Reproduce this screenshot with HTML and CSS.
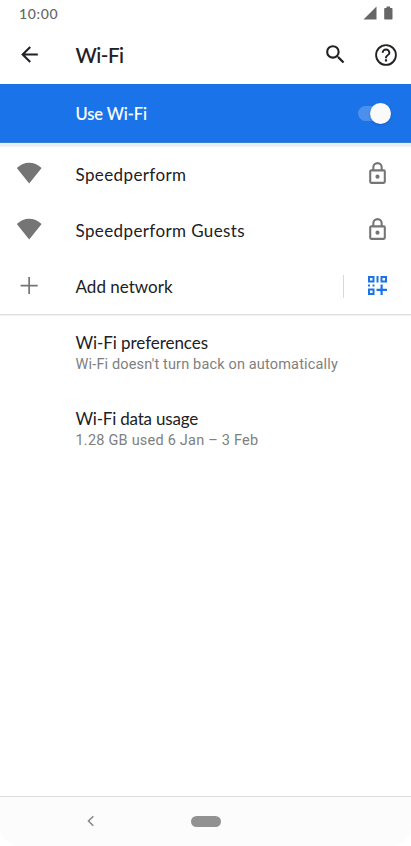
FILE: index.html
```html
<!DOCTYPE html>
<html lang="en">
<head>
<meta charset="utf-8">
<title>Wi-Fi</title>
<link rel="stylesheet" href="styles.css">
</head>
<body>
<div class="screen">
  <div class="status">
    <span class="clock">10:00</span>
    <svg class="status-icons" width="30" height="14" viewBox="0 0 30 14"><path d="M.5 13.500L13.500.5v13z"/><path d="M21.200 2.900q0-.8.8-.8h1.500V.5h3.600v1.600h1.600q.8 0 .8.8v9.800q0 .8-.8.8H22q-.8 0-.8-.8z"/></svg>
  </div>
  <header class="bar">
    <svg class="back" width="25" height="25" viewBox="0 0 24 24"><path d="M20 11H7.830l5.590-5.590L12 4l-8 8 8 8 1.410-1.410L7.830 13H20z"/></svg>
    <h1 class="title"><span class="t-title">Wi-Fi</span></h1>
    <svg class="search" width="25" height="25" viewBox="0 0 24 24"><path d="M15.500 14h-.790l-.280-.270A6.470 6.470 0 0 0 16 9.500 6.500 6.500 0 1 0 9.500 16c1.610 0 3.090-.590 4.230-1.570l.270.280v.790l5 4.990L20.490 19zm-6 0a4.500 4.500 0 1 1 0-9 4.500 4.500 0 0 1 0 9z"/></svg>
    <svg class="help" width="26" height="26" viewBox="0 0 24 24"><path d="M11 18h2v-2h-2zm1-16a10 10 0 1 0 0 20 10 10 0 0 0 0-20zm0 18.300a8.300 8.300 0 1 1 0-16.600 8.300 8.300 0 0 1 0 16.600zM12 6a4 4 0 0 0-4 4h1.800a2.200 2.200 0 1 1 4.400 0c0 2-3.100 1.750-3.100 5h1.800c0-2.250 3.100-2.500 3.100-5a4 4 0 0 0-4-4z"/></svg>
  </header>
  <div class="switch-bar">
    <span class="label t-use">Use Wi-Fi</span>
    <span class="track"><span class="thumb"></span></span>
  </div>
  <main class="content">
    <div class="row">
      <svg class="lead" width="26" height="22" viewBox="0 0 26 22"><path d="M.8 6Q6.500.8 13.200.8T25.600 6L13.200 21.600z"/></svg>
      <span class="name t-speed">Speedperform</span>
      <svg class="lock" width="25" height="25" viewBox="0 0 24 24"><path d="M18 8h-1V6A5 5 0 0 0 7 6v2H6a2 2 0 0 0-2 2v10a2 2 0 0 0 2 2h12a2 2 0 0 0 2-2V10a2 2 0 0 0-2-2zM9 6a3 3 0 0 1 6 0v2H9zm9 14H6V10h12zm-6-3a2 2 0 1 0 0-4 2 2 0 0 0 0 4z"/></svg>
    </div>
    <div class="row">
      <svg class="lead" width="26" height="22" viewBox="0 0 26 22"><path d="M.8 6Q6.500.8 13.200.8T25.600 6L13.200 21.600z"/></svg>
      <span class="name t-guests">Speedperform Guests</span>
      <svg class="lock" width="25" height="25" viewBox="0 0 24 24"><path d="M18 8h-1V6A5 5 0 0 0 7 6v2H6a2 2 0 0 0-2 2v10a2 2 0 0 0 2 2h12a2 2 0 0 0 2-2V10a2 2 0 0 0-2-2zM9 6a3 3 0 0 1 6 0v2H9zm9 14H6V10h12zm-6-3a2 2 0 1 0 0-4 2 2 0 0 0 0 4z"/></svg>
    </div>
    <div class="row add">
      <svg class="lead" width="26" height="22" viewBox="0 0 26 22"><path d="M12.300 3h1.700v7.700h7.700v1.700H14v7.700h-1.700v-7.700H4.600v-1.700h7.700z"/></svg>
      <span class="name t-add">Add network</span>
      <span class="separator"></span>
      <svg class="qr" width="20" height="20" viewBox="0 0 20 20"><path fill-rule="evenodd" d="M0 0h6.500v6.500H0zm2 2v2.500h2.500V2zM12.500 0H19v6.500h-6.500zm2 2v2.500H17V2zM0 12.500h6.500V19H0zm2 2V17h2.500v-2.500zM8.500 0h2v6.500h-2zM0 8.500h2v2H0zM4.500 8.500h2v2h-2zM12.500 8.500h2.200v4.200H19v2.200h-4.300V19h-2.200v-4.100H8.500v-2.200h4z"/></svg>
    </div>
    <section class="pref">
      <div class="name t-pref">Wi-Fi preferences</div>
      <div class="summary t-auto">Wi-Fi doesn't turn back on automatically</div>
    </section>
    <section class="pref">
      <div class="name t-data">Wi-Fi data usage</div>
      <div class="summary t-used">1.28 GB used 6 Jan – 3 Feb</div>
    </section>
  </main>
  <nav class="nav">
    <svg class="nav-back" width="8" height="12" viewBox="0 0 8 12"><path d="M6.300 1.300L1.500 6l4.800 4.700"/></svg>
    <span class="home"></span>
  </nav>
</div>
</body>
</html>
```
FILE: styles.css
```css
* { box-sizing: border-box; }
body { margin: 0; background: #fff; font-family: Lato, "Open Sans", sans-serif; color: #202124; }
svg { display: block; flex: none; fill: #757575; }
.screen { width: 411px; height: 846px; display: flex; flex-direction: column; overflow: hidden; }
.status { height: 27px; padding: 0 18px 0 19px; display: flex; justify-content: space-between; align-items: center; }
.clock { font-size: 14px; line-height: 20px; font-weight: 500; color: #666; letter-spacing: .65px; }
.status-icons { fill: #666; margin-top: -1px; }
.bar { height: 57px; padding: 0 12px 0 17px; display: flex; align-items: center; }
.bar svg { fill: #202124; margin-bottom: 2px; }
.title { margin: 0; padding: 0 0 1px 33.500px; flex: 1; font-size: 20.500px; line-height: 26px; font-weight: 500; letter-spacing: -.45px; white-space: nowrap; -webkit-text-stroke: .1px; }
.search { margin-right: 25px; }
.switch-bar { height: 59px; flex: none; padding: 0 20.500px 0 75.500px; display: flex; align-items: center; justify-content: space-between; background: #1a73e8; color: #fff; border-bottom: 1px solid #3b7fd5; box-shadow: 0 3px 0 #e9eef5, 0 4px 1px #f3f3f3; }
.label { font-size: 16.500px; font-weight: 500; line-height: 22px; padding-top: 2px; letter-spacing: -.1px; -webkit-text-stroke: .1px; }
.track { width: 33px; height: 15px; border-radius: 8px; background: #4b90ed; display: flex; align-items: center; justify-content: flex-end; }
.thumb { width: 21px; height: 21px; flex: none; border-radius: 50%; background: #fafafa; box-shadow: 0 1px 2px #0d47a180; }
.content { flex: 1; padding-top: 3px; }
.row { height: 56px; padding: 0 21px 0 16px; display: flex; align-items: center; }
.lead { margin: 0 33.500px 2px 0; }
.name { flex: 1; font-size: 17px; line-height: 22px; white-space: nowrap; }
.row .name { padding-top: 1px; }
.t-speed, .t-guests { letter-spacing: .39px; }
.t-add { letter-spacing: .02px; }
.t-pref { letter-spacing: -.06px; }
.t-data { letter-spacing: -.2px; }
.lock { margin-bottom: 1px; }
.add { height: 57px; border-bottom: 1px solid #dedede; box-shadow: 0 1px #f1f1f1; }
.separator { width: 1px; height: 23px; background: #d8d8d8; margin-right: 24px; }
.qr { fill: #1a73e8; margin-right: 2px; }
.pref { height: 76px; padding: 17px 0 0 75.500px; }
.summary { font-family: Roboto, sans-serif; font-size: 14.500px; line-height: 20px; padding-top: 1px; color: #808080; white-space: nowrap; }
.t-auto { letter-spacing: .16px; }
.t-used { letter-spacing: .22px; }
.nav { height: 50px; display: flex; align-items: center; padding: 0 0 1px 87px; background: #fcfcfc; border-top: 1px solid #dedede; border-radius: 0 0 20px 20px; }
.nav-back { fill: none; stroke: #858585; stroke-width: 1.500; }
.home { width: 30px; height: 11px; border-radius: 6px; margin-left: 96px; background: #929292; }
```
